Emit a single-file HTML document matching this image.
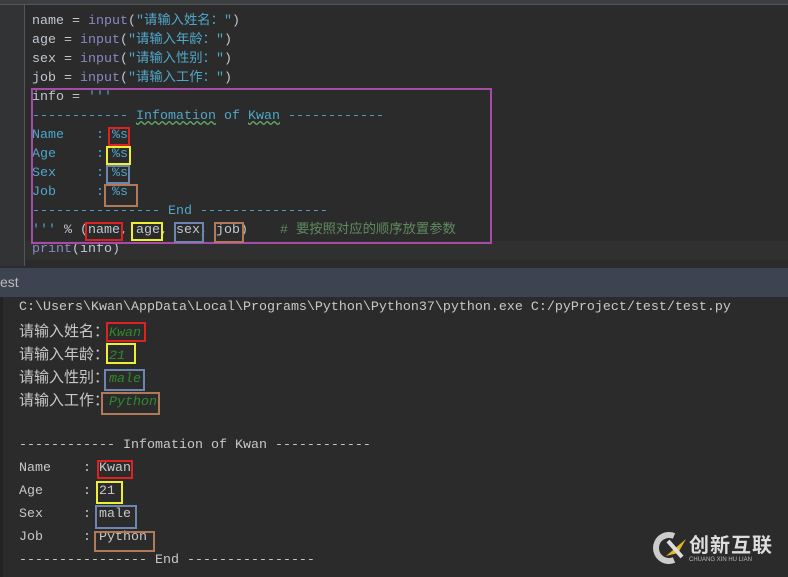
<!DOCTYPE html>
<html><head><meta charset="utf-8"><style>
body{margin:0;width:788px;height:577px;background:#2b2b2b;overflow:hidden;position:relative;font-family:"Liberation Mono","Noto Sans CJK SC",monospace}
.ed{position:absolute;left:0;top:0;width:788px;height:266px;background:#2b2b2b}
.gut{position:absolute;left:0;top:0;width:24px;height:266px;background:#313335;border-right:1px solid #555}
.top{position:absolute;left:0;top:0;width:788px;height:4px;background:#3c3f41;border-bottom:1px solid #555}
.l{position:absolute;left:32px;font-size:13.33px;line-height:19px;height:19px;color:#c0c8d0;white-space:pre}
.s{color:#4fa6c8}.f{color:#8888c6}.c{color:#5f8a5f}
.bx{position:absolute;border:2px solid;box-sizing:border-box}
.hdr{position:absolute;left:0;top:268px;width:788px;height:29px;background:#3d4350;color:#bbb;font-family:"Liberation Sans",sans-serif;font-size:14px;line-height:29px}
.con{position:absolute;left:0;top:297px;width:788px;height:280px;background:#2b2b2b;border-left:3px solid #232323}
.k{position:absolute;left:19px;font-family:"Liberation Mono","Noto Serif CJK SC",monospace;font-size:13.33px;line-height:20px;color:#c8c8c8;white-space:pre}
.cj{font-family:"Noto Sans CJK SC",sans-serif;font-size:15px}
.g{color:#2e8b2e;font-style:italic}
</style></head><body>
<div class="ed"><div class="gut"></div><div class="top"></div>
<div style="position:absolute;left:25px;top:241px;width:763px;height:19px;background:#303030"></div>
<div class="l" style="top:12px">name = <span class="f">input</span>(<span class="s">"请输入姓名："</span>)</div>
<div class="l" style="top:31px">age = <span class="f">input</span>(<span class="s">"请输入年龄："</span>)</div>
<div class="l" style="top:50px">sex = <span class="f">input</span>(<span class="s">"请输入性别："</span>)</div>
<div class="l" style="top:69px">job = <span class="f">input</span>(<span class="s">"请输入工作："</span>)</div>
<div class="l" style="top:88px">info = <span class="s">'''</span></div>
<div class="l s" style="top:107px">------------ <u style="text-decoration-style:wavy;text-decoration-color:#6a6">Infomation</u> of <u style="text-decoration-style:wavy;text-decoration-color:#6a6">Kwan</u> ------------</div>
<div class="l s" style="top:126px">Name    : %s</div>
<div class="l s" style="top:145px">Age     : %s</div>
<div class="l s" style="top:164px">Sex     : %s</div>
<div class="l s" style="top:183px">Job     : %s</div>
<div class="l s" style="top:202px">---------------- End ----------------</div>
<div class="l" style="top:221px"><span class="s">'''</span> % (name, age, sex, job)    <span class="c"># 要按照对应的顺序放置参数</span></div>
<div class="l" style="top:240px"><span class="f">print</span>(info)</div>
<div class="bx" style="left:31px;top:88px;width:461px;height:156px;border-color:#a64ca6"></div>
<div class="bx" style="left:108px;top:127px;width:22px;height:19px;border-color:#d22"></div>
<div class="bx" style="left:106px;top:146px;width:25px;height:19px;border-color:#ee3"></div>
<div class="bx" style="left:106px;top:165px;width:24px;height:19px;border-color:#6d86b0"></div>
<div class="bx" style="left:104px;top:184px;width:34px;height:23px;border-color:#b07a5a"></div>
<div class="bx" style="left:85px;top:222px;width:38px;height:19px;border-color:#d22"></div>
<div class="bx" style="left:131px;top:222px;width:32px;height:19px;border-color:#ee3"></div>
<div class="bx" style="left:174px;top:222px;width:30px;height:21px;border-color:#6d86b0"></div>
<div class="bx" style="left:214px;top:222px;width:30px;height:21px;border-color:#b07a5a"></div>
</div>
<div class="hdr">est</div>
<div class="con"></div>
<div class="k" style="top:298px">C:\Users\Kwan\AppData\Local\Programs\Python\Python37\python.exe C:/pyProject/test/test.py</div>
<div class="k" style="top:321px"><span class="cj">请输入姓名：</span><span class="g">Kwan</span></div>
<div class="k" style="top:344px"><span class="cj">请输入年龄：</span><span class="g">21</span></div>
<div class="k" style="top:367px"><span class="cj">请输入性别：</span><span class="g">male</span></div>
<div class="k" style="top:390px"><span class="cj">请输入工作：</span><span class="g">Python</span></div>
<div class="k" style="top:436px">------------ Infomation of Kwan ------------</div>
<div class="k" style="top:459px">Name    : Kwan</div>
<div class="k" style="top:482px">Age     : 21</div>
<div class="k" style="top:505px">Sex     : male</div>
<div class="k" style="top:528px">Job     : Python</div>
<div class="k" style="top:551px">---------------- End ----------------</div>
<div class="bx" style="left:106px;top:322px;width:40px;height:20px;border-color:#d22"></div>
<div class="bx" style="left:106px;top:343px;width:30px;height:21px;border-color:#ee3"></div>
<div class="bx" style="left:104px;top:369px;width:41px;height:22px;border-color:#6d86b0"></div>
<div class="bx" style="left:101px;top:392px;width:59px;height:23px;border-color:#b07a5a"></div>
<div class="bx" style="left:97px;top:460px;width:36px;height:19px;border-color:#d22"></div>
<div class="bx" style="left:96px;top:481px;width:27px;height:23px;border-color:#ee3"></div>
<div class="bx" style="left:95px;top:505px;width:42px;height:24px;border-color:#6d86b0"></div>
<div class="bx" style="left:94px;top:531px;width:61px;height:21px;border-color:#b07a5a"></div>
<svg style="position:absolute;left:652px;top:531px" width="40" height="34" viewBox="0 0 40 34"><path d="M22 5 A13 13 0 1 0 22 29" fill="none" stroke="#ccc" stroke-width="6"/><path d="M14 25 L34 8 L26 22 Z" fill="#e6b820"/><path d="M16 10 L30 26" stroke="#ddd" stroke-width="4"/></svg>
<div style="position:absolute;left:689px;top:533px;color:#ddd;font-family:'Noto Sans CJK SC',sans-serif;font-size:20px;line-height:22px;font-weight:bold;letter-spacing:1px">创新互联</div>
<div style="position:absolute;left:689px;top:557px;color:#bbb;font-family:'Liberation Sans',sans-serif;font-size:6px;line-height:7px">CHUANG XIN HU LIAN</div>
</body></html>
